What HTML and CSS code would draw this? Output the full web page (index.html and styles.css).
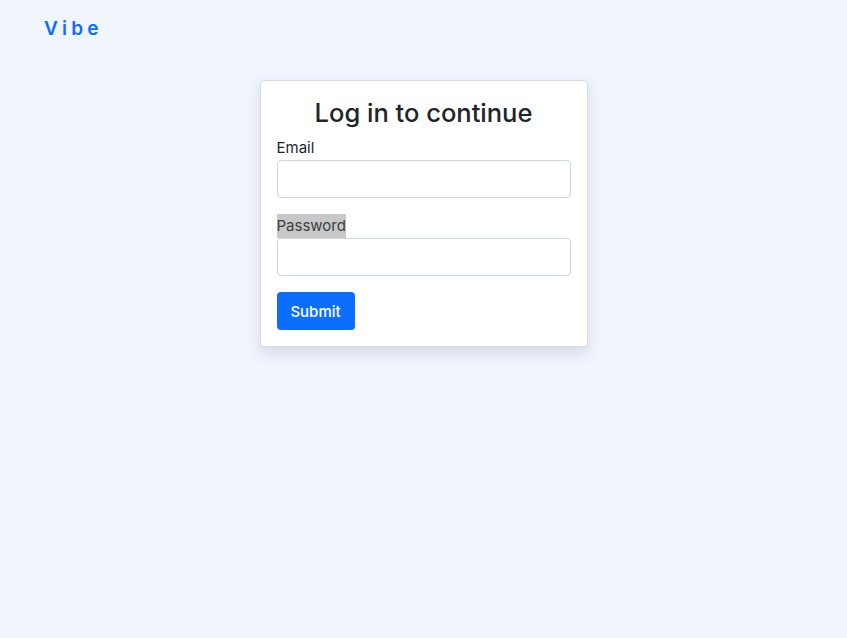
FILE: index.html
```html
<!DOCTYPE html>
<html lang="en">
<head>
<meta charset="utf-8">
<title>Vibe - Log in</title>
<link rel="stylesheet" href="styles.css">
</head>
<body>
<header class="topbar">
  <a class="logo" href="#">Vibe</a>
</header>
<main class="page">
  <form class="card">
    <h1 class="card-title">Log in to continue</h1>
    <div class="field">
      <label class="label" for="email">Email</label>
      <input class="input" id="email" type="email">
    </div>
    <div class="field">
      <label class="label label-selected" for="password">Password</label>
      <input class="input" id="password" type="password">
    </div>
    <button class="btn" type="button">Submit</button>
  </form>
</main>
</body>
</html>
```
FILE: styles.css
```css
* { box-sizing: border-box; }
html, body { margin: 0; height: 100%; }
body {
  background: #f1f5fe;
  font-family: Inter, "Noto Sans", sans-serif;
  color: #212529;
}
.topbar {
  padding: 17px 44px 0;
  height: 44px;
}
.logo {
  color: #0d6efd;
  text-decoration: none;
  font-weight: 600;
  font-size: 19px;
  letter-spacing: 4.2px;
  line-height: 24px;
}
.page {
  display: flex;
  justify-content: center;
  padding-top: 36px;
}
.card {
  width: 328px;
  background: #fff;
  border: 1px solid #d9dce1;
  border-radius: 4px;
  box-shadow: 0 6px 14px rgba(60, 70, 100, 0.16);
  padding: 16px;
}
.card-title {
  margin: 0 0 8px;
  text-align: center;
  font-size: 25.5px;
  font-weight: 500;
  line-height: 31px;
  color: #212529;
}
.field { margin-bottom: 16px; }
.label {
  display: inline-block;
  font-size: 15px;
  line-height: 24px;
  color: #212529;
}
.label-selected { background: #c8c8c8; color: #3a3f44; }
.input {
  display: block;
  width: 100%;
  height: 38px;
  border: 1px solid #ced4da;
  border-radius: 4px;
  background: #fff;
  font: inherit;
}
.btn {
  display: block;
  height: 38px;
  width: 78px;
  border: 0;
  border-radius: 4px;
  background: #0d6efd;
  color: #fff;
  font: inherit;
  font-size: 15px;
  font-weight: 500;
}
```
